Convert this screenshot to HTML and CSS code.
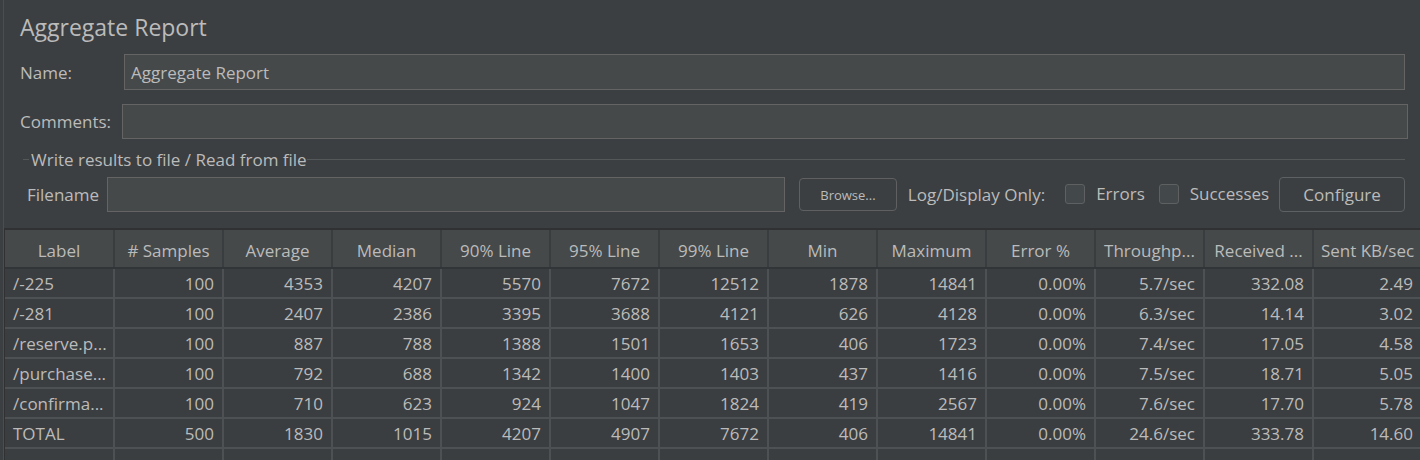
FILE: index.html
```html
<!DOCTYPE html>
<html lang="en">
<head>
<meta charset="utf-8">
<title>Aggregate Report</title>
<link rel="stylesheet" href="styles.css">
</head>
<body>
<div class="app">
  <div class="panel">
    <div class="title">Aggregate Report</div>
    <div class="row row-name">
      <span class="lbl lbl-name">Name:</span>
      <div class="field field-name">Aggregate Report</div>
    </div>
    <div class="row row-comments">
      <span class="lbl lbl-comments">Comments:</span>
      <div class="field field-comments"></div>
    </div>
    <div class="group">
      <div class="legend">
        <span class="tick"></span>
        <span class="legend-text">Write results to file / Read from file</span>
        <span class="rule"></span>
      </div>
      <div class="file-row">
        <span class="lbl lbl-file">Filename</span>
        <div class="field field-file"></div>
        <div class="btn btn-browse">Browse...</div>
        <span class="txt log-text">Log/Display Only:</span>
        <span class="check"></span>
        <span class="txt chk-text">Errors</span>
        <span class="check check-2"></span>
        <span class="txt chk-text">Successes</span>
        <div class="btn btn-configure">Configure</div>
      </div>
    </div>
  </div>
  <div class="table-wrap">
    <table class="grid">
      <thead>
        <tr>
          <th>Label</th><th># Samples</th><th>Average</th><th>Median</th><th>90% Line</th><th>95% Line</th><th>99% Line</th><th>Min</th><th>Maximum</th><th>Error %</th><th>Throughp...</th><th>Received ...</th><th>Sent KB/sec</th>
        </tr>
      </thead>
      <tbody>
        <tr><td class="l">/-225</td><td>100</td><td>4353</td><td>4207</td><td>5570</td><td>7672</td><td>12512</td><td>1878</td><td>14841</td><td>0.00%</td><td>5.7/sec</td><td>332.08</td><td>2.49</td></tr>
        <tr><td class="l">/-281</td><td>100</td><td>2407</td><td>2386</td><td>3395</td><td>3688</td><td>4121</td><td>626</td><td>4128</td><td>0.00%</td><td>6.3/sec</td><td>14.14</td><td>3.02</td></tr>
        <tr><td class="l">/reserve.p...</td><td>100</td><td>887</td><td>788</td><td>1388</td><td>1501</td><td>1653</td><td>406</td><td>1723</td><td>0.00%</td><td>7.4/sec</td><td>17.05</td><td>4.58</td></tr>
        <tr><td class="l">/purchase...</td><td>100</td><td>792</td><td>688</td><td>1342</td><td>1400</td><td>1403</td><td>437</td><td>1416</td><td>0.00%</td><td>7.5/sec</td><td>18.71</td><td>5.05</td></tr>
        <tr><td class="l">/confirma...</td><td>100</td><td>710</td><td>623</td><td>924</td><td>1047</td><td>1824</td><td>419</td><td>2567</td><td>0.00%</td><td>7.6/sec</td><td>17.70</td><td>5.78</td></tr>
        <tr><td class="l">TOTAL</td><td>500</td><td>1830</td><td>1015</td><td>4207</td><td>4907</td><td>7672</td><td>406</td><td>14841</td><td>0.00%</td><td>24.6/sec</td><td>333.78</td><td>14.60</td></tr>
        <tr class="empty"><td></td><td></td><td></td><td></td><td></td><td></td><td></td><td></td><td></td><td></td><td></td><td></td><td></td></tr>
      </tbody>
    </table>
  </div>
</div>
</body>
</html>
```

FILE: styles.css
```css
* { box-sizing: border-box; }

html, body {
  margin: 0;
  padding: 0;
  background: #3c3f41;
}

body {
  width: 1420px;
  height: 460px;
  overflow: hidden;
  font-family: "Open Sans", "Noto Sans", "DejaVu Sans", sans-serif;
  color: #bbbbbb;
}

.app {
  height: 460px;
  border-left: 1px solid #4b4e50;
  margin-left: 3px;
  overflow: hidden;
}

.panel {
  padding: 12px 0 0 16px;
}

.title {
  height: 30px;
  line-height: 30px;
  font-size: 23px;
  color: #bbbbbb;
}

.row {
  display: flex;
  align-items: center;
  margin-top: 12px;
}

.row-comments {
  margin-top: 14px;
}

.lbl {
  font-size: 17px;
  color: #bbbbbb;
}

.lbl-name { width: 104px; }
.lbl-comments { width: 102px; }

.field {
  background: #45494a;
  border: 1px solid #646464;
  height: 36px;
  font-size: 17px;
  line-height: 35px;
  padding-left: 6px;
  color: #bbbbbb;
}

.field-name { width: 1281px; }
.field-comments { width: 1286px; height: 35px; }

.group {
  margin-top: 10px;
  margin-right: 15px;
}

.legend {
  display: flex;
  align-items: center;
  height: 20px;
}

.tick {
  width: 6px;
  height: 1px;
  background: #555859;
  margin-left: 3px;
  margin-right: 2px;
}

.legend-text {
  font-size: 17px;
  white-space: nowrap;
}

.rule {
  flex: 1;
  height: 1px;
  background: #555859;
}

.file-row {
  display: flex;
  align-items: center;
  margin-top: 8px;
  height: 35px;
}

.lbl-file {
  width: 87px;
  padding-left: 7px;
}

.field-file {
  width: 679px;
  height: 35px;
}

.btn {
  border: 1px solid #5e6061;
  border-radius: 4px;
  background: #3c3f41;
  color: #bbbbbb;
  display: flex;
  align-items: center;
  justify-content: center;
}

.btn-browse {
  margin-left: 14px;
  width: 98px;
  height: 33px;
  font-size: 13px;
}

.txt {
  font-size: 17px;
  white-space: nowrap;
}

.log-text {
  margin-left: 11px;
}

.check {
  width: 20px;
  height: 20px;
  border: 1px solid #5e6061;
  border-radius: 3px;
  background: #43494a;
  margin-left: 20px;
  margin-right: 11px;
  margin-bottom: 2px;
}

.chk-text { margin-bottom: 2px; }

.check-2 { margin-left: 14px; }

.btn-configure {
  margin-left: 10px;
  width: 126px;
  height: 35px;
  font-size: 17px;
}

.table-wrap {
  margin-top: 16px;
  border-top: 2px solid #2f3133;
  border-left: 1px solid #2f3133;
  width: 1420px;
}

.grid {
  table-layout: fixed;
  border-collapse: collapse;
  width: 1417px;
}

.grid th,
.grid td {
  width: 109px;
  font-weight: normal;
  white-space: nowrap;
  overflow: hidden;
  color: #bbbbbb;
}

.grid th {
  height: 38px;
  background: #45494a;
  font-size: 17px;
  text-align: center;
  border-right: 2px solid #3a3d3f;
  border-bottom: 2px solid #323537;
  padding: 3px 3px 0;
}

.grid td {
  height: 30px;
  font-size: 17px;
  text-align: right;
  padding: 1px 8px 0 8px;
  border-right: 2px solid #4e5153;
  border-bottom: 2px solid #4e5153;
  background: #3b3e40;
}

.grid td.l {
  text-align: left;
}
```
